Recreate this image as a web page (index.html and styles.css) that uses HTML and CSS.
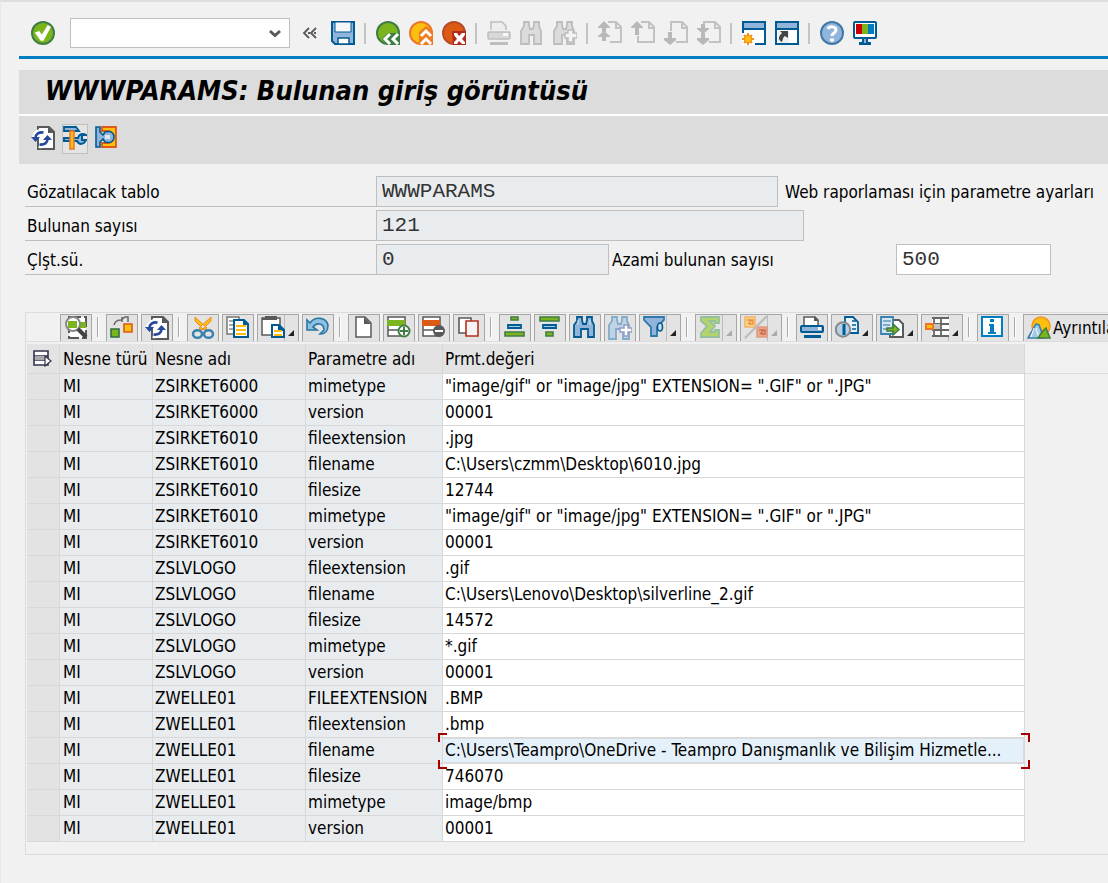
FILE: index.html
```html
<!DOCTYPE html>
<html lang="tr">
<head>
<meta charset="utf-8">
<title>WWWPARAMS: Bulunan giriş görüntüsü</title>
<link rel="stylesheet" href="styles.css">
</head>
<body>
<svg class="sprite" aria-hidden="true">
  <symbol id="i-ok" viewBox="0 0 24 24"><circle cx="12" cy="12" r="11" fill="#7ab51d" stroke="#3f7d45" stroke-width="2"/><path d="M5 12l3-1 3 4 6-10 2 1-7 13h-2z" fill="#fff" stroke="#fff" stroke-width="1.5"/></symbol>
  <symbol id="i-collapse" viewBox="0 0 23 24"><path d="M10 7l-5 5 5 5M17 7l-5 5 5 5M9 12h2M15 12h2" fill="none" stroke="#58595b" stroke-width="1.8"/></symbol>
  <symbol id="i-save" viewBox="0 0 24 24"><path d="M1 1h22v22H4l-3-3z" fill="#91b5da" stroke="#005b94" stroke-width="2"/><path d="M4 1h16v10H4z" fill="#f4f6f8" stroke="#005b94"/><path d="M7 17h11v6H7z" fill="#fff" stroke="#005b94" stroke-width="1.5"/></symbol>
  <symbol id="i-back" viewBox="0 0 24 24"><circle cx="12" cy="12" r="11" fill="#7ab51d" stroke="#3f7d45" stroke-width="2"/><path d="M11 24l-5-6 6-6h12v12z" fill="#3f7d45"/><path d="M14 13l-5 5 5 5M22 13l-5 5 5 5" fill="none" stroke="#fff" stroke-width="3"/></symbol>
  <symbol id="i-exit" viewBox="0 0 24 24"><circle cx="12" cy="12" r="11" fill="#fdbf0f" stroke="#e9762b" stroke-width="2"/><path d="M10 24V11l7-6 7 5v14z" fill="#ee7d22"/><path d="M12 15l5-5 5 5M12 23l5-5 5 5" fill="none" stroke="#fff" stroke-width="3"/></symbol>
  <symbol id="i-cancel" viewBox="0 0 24 24"><circle cx="12" cy="12" r="11" fill="#dc5a14" stroke="#b84a2a" stroke-width="2"/><path d="M10 10h14v14H11z" fill="#b12a1c"/><path d="M12 12h3l2 3 3-3h3v2l-3 4 3 3v2h-3l-3-3-2 3h-3v-2l3-3-3-4z" fill="#fff"/></symbol>
  <symbol id="i-print-off" viewBox="0 0 24 24"><path d="M4 9V1h11l4 4v4" fill="#ededed" stroke="#bdbdbd" stroke-width="1.5"/><rect x="1" y="11" width="22" height="7" rx="1" fill="#d8d8d8" stroke="#bdbdbd" stroke-width="1.5"/><path d="M16 12h5v3h-5z" fill="#f8f8f8"/><path d="M3 21h18v3H3z" fill="#bdbdbd"/></symbol>
  <symbol id="i-find-off" viewBox="0 0 24 24"><path d="M4 1h5v3l1 4h3l1-4V1h5v4l2 5v13h-7v-9H9v9H1V10l3-5z" fill="#dcdcdc" stroke="#bdbdbd" stroke-width="1.8"/></symbol>
  <symbol id="i-findnext-off" viewBox="0 0 24 24"><path d="M4 1h5v3l1 4h3l1-4V1h5v4l2 5v13h-7v-9H9v9H1V10l3-5z" fill="#dcdcdc" stroke="#bdbdbd" stroke-width="1.8"/><path d="M15 9h5v3h4v5h-4v4h-5v-4h-3v-5h3z" fill="#f4f4f4" stroke="#bdbdbd" stroke-width="1.5"/></symbol>
  <symbol id="i-first" viewBox="0 0 24 24"><path d="M10 1h8l5 5v15H12M18 1v6h6" fill="none" stroke="#c2c2c2" stroke-width="2"/><path d="M0 6l6-6 6 6v1H8v4H4V7H0zM0 15l6-5 6 5v1H8v3H4v-3H0z" fill="#b8b8b8"/><path d="M4 17h4v3H4z" fill="#b8b8b8"/></symbol>
  <symbol id="i-prev" viewBox="0 0 24 24"><path d="M10 1h8l5 5v15H7v-6M18 1v6h6" fill="none" stroke="#c2c2c2" stroke-width="2"/><path d="M0 6l6-6 6 6v1H8v7H4V7H0z" fill="#b8b8b8"/></symbol>
  <symbol id="i-next" viewBox="0 0 24 24"><path d="M7 10V1h11l5 5v15H12M18 1v6h6" fill="none" stroke="#c2c2c2" stroke-width="2"/><path d="M0 17h4v-6h4v6h4v2l-6 5-6-5z" fill="#b8b8b8"/></symbol>
  <symbol id="i-last" viewBox="0 0 24 24"><path d="M7 3V1h11l5 5v15H12M18 1v6h6" fill="none" stroke="#c2c2c2" stroke-width="2"/><path d="M0 7h4V3h4v4h4v1l-6 5-6-5zM0 17h4v-5h4v5h4v2l-6 5-6-5z" fill="#b8b8b8"/></symbol>
  <symbol id="i-newsession" viewBox="0 0 24 24"><path d="M1 1h22v22H1z" fill="#fff" stroke="#005b94" stroke-width="2"/><path d="M2 2h20v5H2z" fill="#91b5da"/><path d="M1 8h22" stroke="#005b94" stroke-width="2"/><path d="M0 12h7l6 8v4H0z" fill="#fff"/><path d="M6 12v12M0 18h12M2 14l8 8M10 14l-8 8" stroke="#f39322" stroke-width="2"/><circle cx="6" cy="18" r="3.8" fill="#fdbf0f" stroke="#ee8a1c"/></symbol>
  <symbol id="i-shortcut" viewBox="0 0 24 24"><path d="M1 1h22v22H1z" fill="#fff" stroke="#005b94" stroke-width="2"/><path d="M2 2h20v5H2z" fill="#91b5da"/><path d="M1 8h22" stroke="#005b94" stroke-width="2"/><path d="M3 10h11v12H3z" fill="#eee"/><path d="M5 10h8v7l-3-2c-2 1-2 3-3 6-5-3-3-6 0-9z" fill="#444"/></symbol>
  <symbol id="i-help" viewBox="0 0 24 24"><circle cx="12" cy="12" r="11" fill="#91b5da" stroke="#3f78a8" stroke-width="2"/><path d="M8 8c1-3 8-3 8 1 0 3-4 3-4 6M10 19h4" fill="none" stroke="#fff" stroke-width="3"/></symbol>
  <symbol id="i-monitor" viewBox="0 0 24 24"><rect x="1" y="1" width="22" height="16" rx="1" fill="#fff" stroke="#005b94" stroke-width="2"/><path d="M3 3h6v10H3z" fill="#cc0000"/><path d="M9 3h6v10H9z" fill="#7ab51d"/><path d="M15 3h6v10h-6z" fill="#007cc0"/><path d="M9 18h6v3h3v3H6v-3h3z" fill="#005b94"/><path d="M11 18h2v4h-2z" fill="#91b5da"/></symbol>
  <symbol id="i-refresh" viewBox="0 0 24 24"><path d="M7 1h11l5 5v17H7z" fill="#fff" stroke="#58595b" stroke-width="2"/><path d="M17 0l7 7h-7z" fill="#58595b"/><path d="M4 13c0-5 4-8 9-7M17 12c0 5-4 8-9 7" fill="none" stroke="#fff" stroke-width="6"/><path d="M0 11h9l-4.500 5zM12 14h9l-4.500-5z" fill="#26499c"/><path d="M4.500 12c0-4 3-6 8-5.500M16.500 13c0 4-3 6-8 5.500" fill="none" stroke="#26499c" stroke-width="2.600"/></symbol>
  <symbol id="i-tools" viewBox="0 0 24 24"><path d="M1 12h14c1-4 5-5 8-3h-4v5h4c-2 5-7 5-9 1H1z" fill="#91b5da" stroke="#005b94" stroke-width="2"/><path d="M1 1h12l3 4H1z" fill="#91b5da" stroke="#005b94" stroke-width="1.8"/><path d="M7 5h4v18H7z" fill="#fdbf0f" stroke="#e9762b" stroke-width="1.5"/></symbol>
  <symbol id="i-plug" viewBox="0 0 24 24"><path d="M7 1h14v20H7v-4h6c7 0 7-12 0-12H7z" fill="#fdbf0f" stroke="#dc5a14" stroke-width="1.8"/><path d="M1 1h4v5l3 3 2-3c8-2 9 3 9 5s-1 7-9 5l-2-3-3 3v5H1z" fill="#91b5da" stroke="#005b94" stroke-width="1.6"/><path d="M10 9h5v4h-5z" fill="#dbe7f3"/></symbol>
  <symbol id="i-detail" viewBox="0 0 24 24"><path d="M5 1h17v21H5z" fill="#fff" stroke="#58595b" stroke-width="2" stroke-dasharray="12 3"/><path d="M6 6h16v6H6z" fill="#7ab51d"/><circle cx="9" cy="8" r="7" fill="#fff" stroke="#888" stroke-width="2"/><path d="M4 5h9v7H4z" fill="#7ab51d"/><path d="M14 13l8 8" stroke="#444" stroke-width="4"/></symbol>
  <symbol id="i-check" viewBox="0 0 24 24"><path d="M1 13h8v8H1z" fill="#7ab51d" stroke="#2f6f3f" stroke-width="1.6"/><path d="M14 8h8v8h-8z" fill="#fdbf0f" stroke="#dc5a14" stroke-width="1.6"/><path d="M4 9c1-4 4-5 7-5l4-3h3v5M12 1v5" fill="none" stroke="#666" stroke-width="1.5"/></symbol>
  <symbol id="i-cut" viewBox="0 0 24 24"><path d="M4 1v4l9 9 3-2zM20 1v4l-9 9-3-2z" fill="#fdbf0f" stroke="#ee8a1c"/><g fill="none" stroke="#3982ad" stroke-width="2.500"><ellipse cx="6.500" cy="18" rx="4.500" ry="3.800"/><ellipse cx="17.500" cy="18" rx="4.500" ry="3.800"/></g></symbol>
  <symbol id="i-copy" viewBox="0 0 24 24"><path d="M1 1h12v17H1z" fill="#fff" stroke="#777" stroke-width="1.500"/><path d="M3 5h5M3 9h5M3 13h5" stroke="#aaa" stroke-width="2"/><path d="M8 4h10l4 4v13H8z" fill="#fff" stroke="#005b94" stroke-width="2"/><path d="M17 3l6 6h-6z" fill="#005b94"/><path d="M10 10h10M10 14h10M10 18h10" stroke="#fdbf0f" stroke-width="2"/></symbol>
  <symbol id="i-paste" viewBox="0 0 24 24"><path d="M1 2h18v17H1z" fill="#fff" stroke="#58595b" stroke-width="1.500"/><path d="M4 0h12v4H1V2h3z" fill="#58595b"/><path d="M11 9h7l5 5v7H11z" fill="#fff" stroke="#005b94" stroke-width="2"/><path d="M17 8l7 7h-7z" fill="#005b94"/><path d="M13 15h8M13 19h8" stroke="#fdbf0f" stroke-width="2"/></symbol>
  <symbol id="i-undo" viewBox="0 0 24 24"><path d="M1 4v10h10l-4-3c3-5 11-4 11 3l-4 4c8 0 8-6 8-9C20 1 9 0 4 7z" fill="#8fc0df" stroke="#2a76a5" stroke-width="1.600"/></symbol>
  <symbol id="i-new" viewBox="0 0 24 24"><path d="M4 1h9l6 6v14H4z" fill="#fff" stroke="#58595b" stroke-width="1.500"/><path d="M12 1l7 7h-7z" fill="#58595b"/></symbol>
  <symbol id="i-insert" viewBox="0 0 24 24"><path d="M1 1h17v19H1zM1 14h17" fill="#fff" stroke="#58595b" stroke-width="1.500"/><path d="M0 4h18v6H0z" fill="#7ab51d"/><circle cx="17" cy="15" r="5.500" fill="#fff" stroke="#3f7d45" stroke-width="2"/><path d="M17 11v8M13 15h8" stroke="#3f7d45" stroke-width="2"/></symbol>
  <symbol id="i-delete" viewBox="0 0 24 24"><path d="M1 1h17v19H1zM1 14h17" fill="#fff" stroke="#58595b" stroke-width="1.500"/><path d="M0 4h18v6H0z" fill="#dc5a14"/><circle cx="17" cy="15" r="6" fill="#58595b"/><path d="M13 15h8" stroke="#fff" stroke-width="2"/></symbol>
  <symbol id="i-dup" viewBox="0 0 24 24"><path d="M2 2h12v15H2z" fill="#fff" stroke="#58595b" stroke-width="1.600"/><path d="M9 5h12v15H9z" fill="#f4f4f4" stroke="#b5301c" stroke-width="1.600"/></symbol>
  <symbol id="i-asc" viewBox="0 0 24 24"><path d="M8 1h7v3H8zM2 16h19v4H2z" fill="#7ab51d" stroke="#3f7d45" stroke-width="1.600"/><path d="M5 9h13v3H5z" fill="#a9cbe8" stroke="#005b94" stroke-width="1.800"/></symbol>
  <symbol id="i-desc" viewBox="0 0 24 24"><path d="M2 1h19v4H2zM8 16h7v4H8z" fill="#7ab51d" stroke="#3f7d45" stroke-width="1.600"/><path d="M5 9h13v3H5z" fill="#a9cbe8" stroke="#005b94" stroke-width="1.800"/></symbol>
  <symbol id="i-find" viewBox="0 0 24 24"><path d="M4 1h5v3l1 4h3l1-4V1h5v4l2 4v12h-6v-8H8v8H1V9l3-4z" fill="#91b5da" stroke="#005b94" stroke-width="1.800"/><path d="M5 4v5M17 4v5" stroke="#dbe7f3"/></symbol>
  <symbol id="i-findnext" viewBox="0 0 24 24"><path d="M4 1h5v3l1 4h3l1-4V1h5v4l2 4v14h-6V13H8v10H1V9l3-4z" fill="#c0d3e4" stroke="#82acc8" stroke-width="1.800"/><path d="M16 9h4v3h4v4h-4v4h-4v-4h-4v-4h4z" fill="#fff" stroke="#929ec8" stroke-width="1.500"/></symbol>
  <symbol id="i-filter" viewBox="0 0 24 24"><path d="M1 1h20v3l-7 7v9H8v-9L1 4z" fill="#91b5da" stroke="#3077aa" stroke-width="1.800"/><ellipse cx="17" cy="11" rx="2.500" ry="4" fill="#c9def0" stroke="#005b94" stroke-width="1.600"/></symbol>
  <symbol id="i-sum" viewBox="0 0 24 24"><path d="M2 1h18v6h-4V5h-5l5 5-5 6h5v-2h4v7H2v-4l6-7-6-5z" fill="#b3d46b" stroke="#96bfa0" stroke-width="1.800"/></symbol>
  <symbol id="i-subtotal" viewBox="0 0 24 24"><path d="M1 1h10v10H1z" fill="#fbd77e" stroke="#f4b46e" stroke-width="1.600"/><path d="M3 4h6v4H5M4 8l4-4" fill="none" stroke="#ea8a4b" stroke-width="1.300"/><path d="M13 11h10v10H13z" fill="#eda882" stroke="#e09a84" stroke-width="1.600"/><path d="M15 14h6v4h-4M16 18l4-4" fill="none" stroke="#c86a58" stroke-width="1.300"/><path d="M23 0L1 22" stroke="#bbb" stroke-width="2"/></symbol>
  <symbol id="i-print" viewBox="0 0 24 24"><path d="M4 9V1h11l3 3v5" fill="#fff" stroke="#58595b" stroke-width="1.500"/><path d="M14 0l5 5h-5z" fill="#58595b"/><rect x="1" y="10" width="22" height="6" rx="1" fill="#91b5da" stroke="#005b94" stroke-width="2"/><path d="M18 11h3v3h-3z" fill="#fff"/><path d="M4 19h17v3H4z" fill="#005b94"/></symbol>
  <symbol id="i-view" viewBox="0 0 24 24"><path d="M10 1h8l5 5v11H10z" fill="#e9f1f8" stroke="#005b94" stroke-width="1.800"/><path d="M17 5h4M17 9h4M17 13h4" stroke="#005b94" stroke-width="1.600"/><circle cx="8" cy="13.500" r="7.200" fill="#b6d1e6" stroke="#888" stroke-width="2"/><path d="M9 8v11" stroke="#005b94" stroke-width="3"/></symbol>
  <symbol id="i-export" viewBox="0 0 24 24"><path d="M10 4h9l4 4v13H10z" fill="#fff" stroke="#58595b" stroke-width="2"/><path d="M1 1h12v17H1z" fill="#d5e5f3" stroke="#3c82b0" stroke-width="1.800"/><path d="M3 5h8M3 9h7M3 13h5" stroke="#7faccd" stroke-width="2"/><path d="M7 12h6V8l6 5.500-6 5.500v-4H7z" fill="#7ab51d" stroke="#3f7d45" stroke-width="1.500"/></symbol>
  <symbol id="i-layout" viewBox="0 0 24 24"><path d="M7 2h17v18H7z" fill="#fff"/><path d="M7 2h17M7 20h17M7 8h17M7 14h17M9 2v18M16 2v18" stroke="#666" stroke-width="1.800"/><path d="M9 8h6v5H9z" fill="#c4c4c4"/><path d="M1 8h7v5H1z" fill="#fdbf0f" stroke="#e9762b" stroke-width="2"/></symbol>
  <symbol id="i-info" viewBox="0 0 24 24"><path d="M1 1h20v19H1z" fill="#fff" stroke="#007cc0" stroke-width="2"/><path d="M9 3h4v3H9zM8 8h5v8h2v2H7v-2h2v-6H8z" fill="#007cc0"/></symbol>
  <symbol id="i-scene" viewBox="0 0 24 24"><circle cx="14" cy="10" r="9" fill="#fdbf0f" stroke="#f39322" stroke-width="1.500"/><path d="M1 22L9 8l3 1 5 13z" fill="#a5cbe4" stroke="#3982ad" stroke-width="1.600"/><path d="M7 12l-3 9M9 12l3 10" stroke="#fff"/><path d="M11 22l4-6 4-4 4 10z" fill="#7ab51d" stroke="#3f7d45" stroke-width="1.500"/></symbol>
  <symbol id="i-select" viewBox="0 0 20 18"><path d="M1 1h14v14H1zM1 6h14M1 10h14" fill="#fff" stroke="#33334d" stroke-width="1.600"/><path d="M2 6h10v4H2z" fill="#aaa"/><path d="M12 6v10l6-5z" fill="#fff" stroke="#33334d" stroke-width="1.200"/></symbol>
</svg>

<div class="window">
  <header class="system-bar">
    <button class="tool confirm" aria-label="Giriş"><svg><use href="#i-ok"/></svg></button>
    <div class="command">
      <input type="text" aria-label="Komut">
      <button class="command-open" aria-label="Komut listesi"><svg viewBox="0 0 12 9"><path d="M1 2l5 4.500L11 2" fill="none" stroke="#58595b" stroke-width="3"/></svg></button>
    </div>
    <button class="tool collapse" aria-label="Daralt"><svg><use href="#i-collapse"/></svg></button>
    <button class="tool" aria-label="Kaydet"><svg><use href="#i-save"/></svg></button>
    <span class="divider"></span>
    <button class="tool" aria-label="Geri"><svg><use href="#i-back"/></svg></button>
    <button class="tool" aria-label="Çıkış"><svg><use href="#i-exit"/></svg></button>
    <button class="tool" aria-label="İptal"><svg><use href="#i-cancel"/></svg></button>
    <span class="divider"></span>
    <button class="tool" aria-label="Yazdır" disabled><svg><use href="#i-print-off"/></svg></button>
    <button class="tool" aria-label="Bul" disabled><svg><use href="#i-find-off"/></svg></button>
    <button class="tool" aria-label="Sonrakini bul" disabled><svg><use href="#i-findnext-off"/></svg></button>
    <span class="divider"></span>
    <button class="tool" aria-label="İlk sayfa" disabled><svg><use href="#i-first"/></svg></button>
    <button class="tool" aria-label="Önceki sayfa" disabled><svg><use href="#i-prev"/></svg></button>
    <button class="tool" aria-label="Sonraki sayfa" disabled><svg><use href="#i-next"/></svg></button>
    <button class="tool" aria-label="Son sayfa" disabled><svg><use href="#i-last"/></svg></button>
    <span class="divider"></span>
    <button class="tool" aria-label="Yeni oturum"><svg><use href="#i-newsession"/></svg></button>
    <button class="tool" aria-label="Kısayol"><svg><use href="#i-shortcut"/></svg></button>
    <span class="divider"></span>
    <button class="tool" aria-label="Yardım"><svg><use href="#i-help"/></svg></button>
    <button class="tool" aria-label="Yerleşim"><svg><use href="#i-monitor"/></svg></button>
  </header>

  <h1 class="title">WWWPARAMS: Bulunan giriş görüntüsü</h1>

  <div class="app-bar">
    <button class="tool" aria-label="Yenile"><svg><use href="#i-refresh"/></svg></button>
    <button class="tool framed" aria-label="Araçlar"><svg><use href="#i-tools"/></svg></button>
    <button class="tool" aria-label="Bağlantı"><svg><use href="#i-plug"/></svg></button>
  </div>

  <form class="params">
    <div class="row">
      <label class="name" for="table">Gözatılacak tablo</label>
      <input class="field w-table" id="table" type="text" value="WWWPARAMS" readonly>
      <span class="note">Web raporlaması için parametre ayarları</span>
    </div>
    <div class="row">
      <label class="name" for="hits">Bulunan sayısı</label>
      <input class="field w-hits" id="hits" type="text" value="121" readonly>
    </div>
    <div class="row">
      <label class="name" for="runtime">Çlşt.sü.</label>
      <input class="field w-runtime" id="runtime" type="text" value="0" readonly>
      <label class="max-label" for="max">Azami bulunan sayısı</label>
      <input class="field w-max" id="max" type="text" value="500">
    </div>
  </form>

  <section class="grid">
    <div class="grid-bar">
      <button aria-label="Ayrıntı"><svg><use href="#i-detail"/></svg></button>
      <span class="bar-sep"></span>
      <button aria-label="Kontrol"><svg><use href="#i-check"/></svg></button>
      <button aria-label="Yenile"><svg><use href="#i-refresh"/></svg></button>
      <span class="bar-sep"></span>
      <button aria-label="Kes"><svg><use href="#i-cut"/></svg></button>
      <button aria-label="Kopyala"><svg><use href="#i-copy"/></svg></button>
      <button class="split lined" aria-label="Yapıştır"><svg><use href="#i-paste"/></svg><i></i></button>
      <button aria-label="Geri al"><svg><use href="#i-undo"/></svg></button>
      <span class="bar-sep"></span>
      <button aria-label="Yeni"><svg><use href="#i-new"/></svg></button>
      <button aria-label="Satır ekle"><svg><use href="#i-insert"/></svg></button>
      <button aria-label="Satır sil"><svg><use href="#i-delete"/></svg></button>
      <button aria-label="Satır çoğalt"><svg><use href="#i-dup"/></svg></button>
      <span class="bar-sep"></span>
      <button aria-label="Artan sırala"><svg><use href="#i-asc"/></svg></button>
      <button aria-label="Azalan sırala"><svg><use href="#i-desc"/></svg></button>
      <button aria-label="Bul"><svg><use href="#i-find"/></svg></button>
      <button aria-label="Sonrakini bul" disabled><svg><use href="#i-findnext"/></svg></button>
      <button class="split lined" aria-label="Filtre"><svg><use href="#i-filter"/></svg><i></i></button>
      <span class="bar-sep"></span>
      <button class="split lined" aria-label="Toplam" disabled><svg><use href="#i-sum"/></svg><i></i></button>
      <button class="split lined" aria-label="Alt toplam" disabled><svg><use href="#i-subtotal"/></svg><i></i></button>
      <span class="bar-sep"></span>
      <button aria-label="Yazdır"><svg><use href="#i-print"/></svg></button>
      <button class="split" aria-label="Görünümler"><svg><use href="#i-view"/></svg><i></i></button>
      <button class="split" aria-label="Dışa aktar"><svg><use href="#i-export"/></svg><i></i></button>
      <button class="split lined" aria-label="Düzen"><svg><use href="#i-layout"/></svg><i></i></button>
      <span class="bar-sep"></span>
      <button aria-label="Bilgi"><svg><use href="#i-info"/></svg></button>
      <span class="bar-sep"></span>
      <button class="wide"><svg><use href="#i-scene"/></svg>Ayrıntılar</button>
    </div>
    <div class="grid-body">
      <table>
        <colgroup><col class="c-sel"><col class="c-type"><col class="c-name"><col class="c-param"><col class="c-value"></colgroup>
        <thead>
          <tr><th class="sel"><svg><use href="#i-select"/></svg></th><th>Nesne türü</th><th>Nesne adı</th><th>Parametre adı</th><th>Prmt.değeri</th></tr>
        </thead>
        <tbody>
          <tr><td></td><td>MI</td><td>ZSIRKET6000</td><td>mimetype</td><td>"image/gif" or "image/jpg" EXTENSION= ".GIF" or ".JPG"</td></tr>
          <tr><td></td><td>MI</td><td>ZSIRKET6000</td><td>version</td><td>00001</td></tr>
          <tr><td></td><td>MI</td><td>ZSIRKET6010</td><td>fileextension</td><td>.jpg</td></tr>
          <tr><td></td><td>MI</td><td>ZSIRKET6010</td><td>filename</td><td>C:\Users\czmm\Desktop\6010.jpg</td></tr>
          <tr><td></td><td>MI</td><td>ZSIRKET6010</td><td>filesize</td><td>12744</td></tr>
          <tr><td></td><td>MI</td><td>ZSIRKET6010</td><td>mimetype</td><td>"image/gif" or "image/jpg" EXTENSION= ".GIF" or ".JPG"</td></tr>
          <tr><td></td><td>MI</td><td>ZSIRKET6010</td><td>version</td><td>00001</td></tr>
          <tr><td></td><td>MI</td><td>ZSLVLOGO</td><td>fileextension</td><td>.gif</td></tr>
          <tr><td></td><td>MI</td><td>ZSLVLOGO</td><td>filename</td><td>C:\Users\Lenovo\Desktop\silverline_2.gif</td></tr>
          <tr><td></td><td>MI</td><td>ZSLVLOGO</td><td>filesize</td><td>14572</td></tr>
          <tr><td></td><td>MI</td><td>ZSLVLOGO</td><td>mimetype</td><td>*.gif</td></tr>
          <tr><td></td><td>MI</td><td>ZSLVLOGO</td><td>version</td><td>00001</td></tr>
          <tr><td></td><td>MI</td><td>ZWELLE01</td><td>FILEEXTENSION</td><td>.BMP</td></tr>
          <tr><td></td><td>MI</td><td>ZWELLE01</td><td>fileextension</td><td>.bmp</td></tr>
          <tr><td></td><td>MI</td><td>ZWELLE01</td><td>filename</td><td class="current">C:\Users\Teampro\OneDrive - Teampro Danışmanlık ve Bilişim Hizmetle...<span class="cursor"></span></td></tr>
          <tr><td></td><td>MI</td><td>ZWELLE01</td><td>filesize</td><td>746070</td></tr>
          <tr><td></td><td>MI</td><td>ZWELLE01</td><td>mimetype</td><td>image/bmp</td></tr>
          <tr><td></td><td>MI</td><td>ZWELLE01</td><td>version</td><td>00001</td></tr>
        </tbody>
      </table>
      <div class="beyond"></div>
    </div>
  </section>
</div>
</body>
</html>
```
FILE: styles.css
```css
* { box-sizing: border-box; }

body {
  margin: 0;
  background: #f1f1f1;
  color: #000;
  font: 17px/24px "DejaVu Sans Condensed", "Noto Sans", sans-serif;
  overflow-x: hidden;
}

.sprite { display: none; }

svg { display: block; width: 24px; height: 24px; flex: none; }

button { font: inherit; color: inherit; }

.window {
  min-height: 100vh;
  border-top: 2px solid #dedede;
  border-left: 1px solid #e8e8e8;
  padding-left: 18px;
}

/* system toolbar */
.system-bar {
  display: flex;
  align-items: center;
  gap: 9px;
  height: 57px;
  padding: 8px 0 0 12px;
  border-bottom: 3px solid #007cc0;
}

.tool {
  flex: none;
  padding: 0;
  border: 0;
  background: none;
}

.confirm { margin-right: 6px; }
.collapse, .collapse svg { width: 23px; }

.command {
  display: flex;
  flex: none;
  width: 220px;
  height: 30px;
  background: #fff;
  border: 1px solid #bfbfbf;
}

.command input {
  flex: 1;
  min-width: 0;
  border: 0;
  background: none;
  font: inherit;
}

.command-open {
  display: flex;
  align-items: center;
  border: 0;
  background: none;
  padding: 0 8px;
}

.command-open svg { width: 12px; height: 9px; }

.divider {
  flex: none;
  width: 3px;
  height: 21px;
  border-left: 2px solid #c4c4c4;
}

/* title and application toolbar */
.title {
  margin: 11px 0 0;
  height: 46px;
  padding-left: 26px;
  background: #dcdcdc;
  border-bottom: 2px solid #fff;
  font-size: 27px;
  font-weight: bold;
  font-style: italic;
  line-height: 42px;
  white-space: nowrap;
}

.app-bar {
  display: flex;
  align-items: flex-start;
  gap: 7px;
  height: 48px;
  padding: 8px 12px;
  background: #dcdcdc;
}

.app-bar .tool { padding: 2px 0; }
.app-bar .framed { padding: 1px 0 3px; background: #e4e4e4; border: 1px solid #bfbfbf; }

/* parameters */
.params {
  display: flex;
  flex-direction: column;
  gap: 3px;
  padding: 12px 0 0 6px;
}

.row { display: flex; height: 31px; line-height: 33px; white-space: nowrap; }

.name {
  width: 351px;
  padding-left: 2px;
  border-bottom: 1px solid #bfbfbf;
}

.field {
  height: 31px;
  padding: 0 5px;
  border: 1px solid #bfbfbf;
  border-radius: 0;
  background: #fff;
  color: #333;
  font: 21px "Liberation Mono", monospace;
}

.field:read-only { background: #e8ecef; }
.note { padding-left: 7px; }
.max-label { width: 287px; padding-left: 3px; }
.w-table { width: 402px; }
.w-hits { width: 428px; }
.w-runtime { width: 233px; }
.w-max { width: 155px; }

/* result grid */
.grid {
  margin: 37px 0 0 6px;
  border: solid #dcdcdc;
  border-width: 1px 0 1px 1px;
  padding-bottom: 12px;
}

.grid-bar {
  display: flex;
  align-items: flex-end;
  gap: 3px;
  height: 29px;
  padding-left: 34px;
  border-bottom: 1px solid #dcdcdc;
  overflow: hidden;
}

.grid-bar button {
  display: flex;
  flex: none;
  width: 32px;
  height: 27px;
  padding: 1px 3px 0;
  border: 1px solid #a6a6a6;
  border-bottom: 0;
  background: #e3e3e3;
}

.grid-bar .split { position: relative; width: 42px; }
.grid-bar .lined { background: linear-gradient(#bcbcbc, #bcbcbc) 26px 0 / 1px 100% no-repeat #e3e3e3; }

.split i {
  position: absolute;
  right: 4px;
  bottom: 5px;
  border: 3px solid #222;
  border-top-color: transparent;
  border-left-color: transparent;
}

.split:disabled i { border-right-color: #aaa; border-bottom-color: #aaa; }

.grid-bar .wide { width: auto; gap: 2px; white-space: nowrap; }

.bar-sep {
  flex: none;
  width: 8px;
  height: 20px;
  margin-bottom: 4px;
  background: linear-gradient(90deg, #a8a8a8 50%, #fff 50%) 2px 0 / 2px 100% no-repeat;
}

.grid-body { display: flex; padding: 2px 0 0 1px; }

table {
  flex: none;
  width: 998px;
  table-layout: fixed;
  border-spacing: 0;
}

.c-sel { width: 33px; }
.c-type { width: 93px; }
.c-name { width: 153px; }
.c-param { width: 137px; }

th, td {
  height: 26px;
  padding: 0 0 0 2px;
  border: solid #d8d8d8;
  border-width: 0 1px 1px 0;
  font-weight: normal;
  line-height: 25px;
  text-align: left;
  white-space: nowrap;
  background: #e8ecef;
}

th { height: 30px; padding-top: 2px; background: #e3e3e3; }
th:nth-child(2), td:nth-child(2) { padding-left: 3px; }
th.sel { padding: 0 0 0 6px; }
.sel svg { width: 20px; height: 18px; }
td:first-child { background: #e3e3e3; }
td:last-child { background: #fff; }

.beyond { flex: 1; height: 30px; border-bottom: 1px solid #dcdcdc; }

td.current {
  position: relative;
  background: #e5f1fa;
  box-shadow: inset 0 1px #dcdcdc, inset 0 -1px #dcdcdc, inset -1px 0 #dcdcdc;
}

.cursor {
  position: absolute;
  inset: -5px -6px -6px -5px;
  --red: linear-gradient(#a60000, #a60000);
  background:
    var(--red) 0 0 / 9px 2px, var(--red) 0 0 / 2px 9px,
    var(--red) 100% 0 / 9px 2px, var(--red) 100% 0 / 2px 9px,
    var(--red) 0 100% / 9px 2px, var(--red) 0 100% / 2px 9px,
    var(--red) 100% 100% / 9px 2px, var(--red) 100% 100% / 2px 9px;
  background-repeat: no-repeat;
}
```
